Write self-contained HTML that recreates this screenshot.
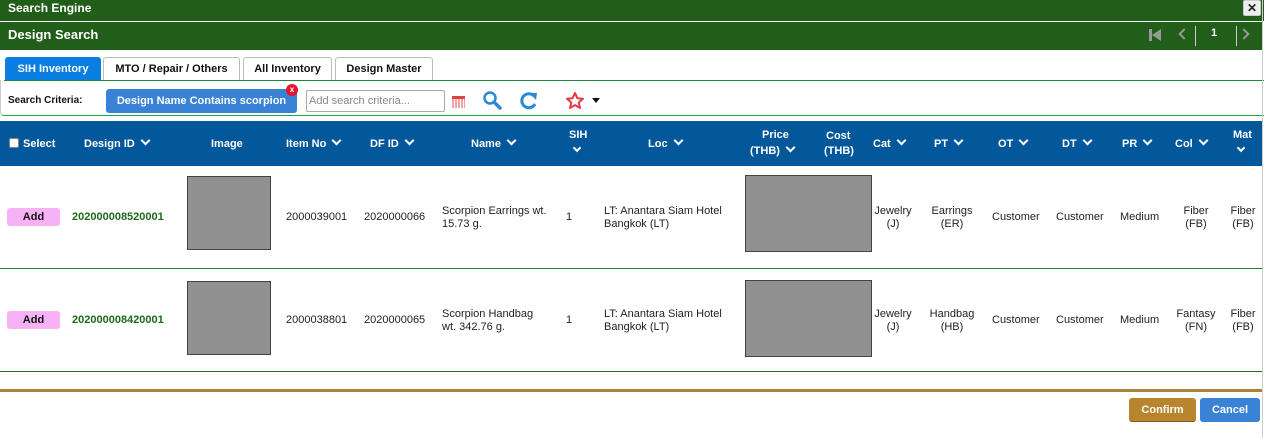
<!DOCTYPE html>
<html><head><meta charset="utf-8"><style>
*{margin:0;padding:0;box-sizing:border-box}
body{width:1264px;height:438px;overflow:hidden;background:#fff;font-family:"Liberation Sans",Arial,sans-serif;position:relative;font-size:11px;color:#222}
.a{position:absolute;white-space:nowrap}
.hd{color:#fff;font-weight:bold;font-size:11px}
.ch::after{content:"";display:inline-block;width:5px;height:5px;border-right:2px solid #fff;border-bottom:2px solid #fff;transform:rotate(45deg);margin-left:7px;position:relative;top:-3px}
.cell{font-size:11px;color:#222;line-height:13px}
.c{text-align:center}
.tab{position:absolute;top:57px;height:24px;border:1px solid #bbb;border-bottom:none;border-radius:3px 3px 0 0;font-weight:bold;font-size:11px;line-height:23px;text-align:center;background:#fff;color:#111;white-space:nowrap}
.gray{position:absolute;background:#919191;border:1px solid #444}
.add{position:absolute;left:7px;width:53px;height:18px;background:#f7b2f5;border-radius:3px;font-weight:bold;font-size:11px;line-height:18px;text-align:center;color:#111}
.did{position:absolute;left:72px;color:#1d6b1a;font-weight:bold;font-size:11px}
</style></head><body>
<div class="a" style="left:0;top:0;width:1264px;height:21px;background:#215e1a"></div>
<div class="a hd" style="left:8px;top:1px;font-size:12px">Search Engine</div>
<div class="a" style="left:1243px;top:0;width:18px;height:16px;background:#eee;border:1px solid #ccc;border-radius:2px;font-weight:bold;text-align:center;line-height:14px;font-size:12px">✕</div>
<div class="a" style="left:0;top:22px;width:1262px;height:28px;background:#215e1a"></div>
<div class="a hd" style="left:8px;top:27px;font-size:13px">Design Search</div>
<div class="a" style="left:1149px;top:29px;width:3px;height:12px;background:#999"></div>
<div class="a" style="left:1152px;top:29px;width:0;height:0;border-top:6px solid transparent;border-bottom:6px solid transparent;border-right:9px solid #999"></div>
<div class="a" style="left:1180px;top:30px;width:8px;height:8px;border-left:2px solid #999;border-bottom:2px solid #999;transform:rotate(45deg)"></div>
<div class="a" style="left:1195px;top:26px;width:1px;height:20px;background:#ccc"></div>
<div class="a" style="left:1211px;top:27px;color:#fff;font-weight:bold;font-size:11px">1</div>
<div class="a" style="left:1236px;top:26px;width:1px;height:20px;background:#ccc"></div>
<div class="a" style="left:1240px;top:30px;width:8px;height:8px;border-right:2px solid #999;border-top:2px solid #999;transform:rotate(45deg)"></div>

<div class="tab" style="left:5px;width:96px;background:#0a7de0;color:#fff;border-color:#0a7de0">SIH Inventory</div>
<div class="tab" style="left:103px;width:137px">MTO / Repair / Others</div>
<div class="tab" style="left:243px;width:89px">All Inventory</div>
<div class="tab" style="left:335px;width:98px">Design Master</div>
<div class="a" style="left:4px;top:80px;width:1260px;height:1px;background:#1c8a3c"></div>
<div class="a" style="left:0;top:80px;width:1264px;height:36px;border-left:1px solid #ccc;border-bottom:1px solid #1ca84f;border-radius:0 0 0 4px"></div>
<div class="a" style="left:8px;top:95px;font-weight:bold;font-size:10px;color:#111">Search Criteria:</div>
<div class="a" style="left:106px;top:89px;width:191px;height:24px;background:#3a82d6;border-radius:3px;color:#fff;font-weight:bold;font-size:11px;line-height:24px;text-align:center">Design Name Contains scorpion</div>
<div class="a" style="left:286px;top:84px;width:12px;height:12px;border-radius:50%;background:#e8132c;color:#fff;font-size:8px;font-weight:bold;line-height:11px;text-align:center">x</div>
<div class="a" style="left:306px;top:90px;width:139px;height:22px;border:1px solid #aaa;border-radius:2px;color:#888;font-size:11px;line-height:20px;padding-left:2px">Add search criteria...</div>
<div class="a" style="left:452px;top:96px;width:13px;height:12px;background:repeating-linear-gradient(90deg,#f0a0a0 0 2px,#fff 2px 3px);border-top:3px solid #d44"></div>
<svg class="a" style="left:482px;top:90px" width="22" height="22" viewBox="0 0 22 22"><circle cx="8" cy="8" r="5.5" fill="none" stroke="#2a8ad6" stroke-width="2.5"/><line x1="12" y1="12" x2="18" y2="18" stroke="#2a8ad6" stroke-width="3.5" stroke-linecap="round"/></svg>
<svg class="a" style="left:518px;top:90px" width="22" height="22" viewBox="0 0 22 22"><path d="M16 6 A7 7 0 1 0 17 14" fill="none" stroke="#2a8ad6" stroke-width="3"/><path d="M12 3 L19 3 L18 10 Z" fill="#2a8ad6"/></svg>
<svg class="a" style="left:565px;top:91px" width="20" height="20" viewBox="0 0 20 20"><path d="M10 2 L12.4 7.3 L18 7.8 L13.7 11.5 L15 17 L10 14.1 L5 17 L6.3 11.5 L2 7.8 L7.6 7.3 Z" fill="none" stroke="#e03c46" stroke-width="2" stroke-linejoin="round"/></svg>
<div class="a" style="left:592px;top:98px;width:0;height:0;border-left:4px solid transparent;border-right:4px solid transparent;border-top:5px solid #111"></div>

<div class="a" style="left:0;top:121px;width:1262px;height:45px;background:#02589a"></div>
<div class="a" style="left:9px;top:138px;width:10px;height:10px;background:#fff;border:1px solid #888;border-radius:2px"></div>
<div class="a hd" style="left:23px;top:138px">Select</div>
<div class="a hd ch" style="left:84px;top:138px">Design ID</div>
<div class="a hd" style="left:211px;top:138px">Image</div>
<div class="a hd ch" style="left:286px;top:138px">Item No</div>
<div class="a hd ch" style="left:370px;top:138px">DF ID</div>
<div class="a hd ch" style="left:471px;top:138px">Name</div>
<div class="a hd" style="left:569px;top:129px">SIH</div>
<div class="a" style="left:574px;top:145px;width:6px;height:6px;border-right:2px solid #fff;border-bottom:2px solid #fff;transform:rotate(45deg)"></div>
<div class="a hd ch" style="left:648px;top:138px">Loc</div>
<div class="a hd" style="left:762px;top:129px">Price</div>
<div class="a hd ch" style="left:750px;top:145px">(THB)</div>
<div class="a hd" style="left:826px;top:130px">Cost</div>
<div class="a hd" style="left:824px;top:145px">(THB)</div>
<div class="a hd ch" style="left:873px;top:138px">Cat</div>
<div class="a hd ch" style="left:934px;top:138px">PT</div>
<div class="a hd ch" style="left:998px;top:138px">OT</div>
<div class="a hd ch" style="left:1062px;top:138px">DT</div>
<div class="a hd ch" style="left:1122px;top:138px">PR</div>
<div class="a hd ch" style="left:1175px;top:138px">Col</div>
<div class="a hd" style="left:1233px;top:129px">Mat</div>
<div class="a" style="left:1238px;top:145px;width:6px;height:6px;border-right:2px solid #fff;border-bottom:2px solid #fff;transform:rotate(45deg)"></div>

<!-- row 1 -->
<div class="add" style="top:208px">Add</div>
<div class="did" style="top:211px">202000008520001</div>
<div class="gray" style="left:187px;top:176px;width:84px;height:74px"></div>
<div class="a cell" style="left:286px;top:211px">2000039001</div>
<div class="a cell" style="left:364px;top:211px">2020000066</div>
<div class="a cell" style="left:442px;top:205px">Scorpion Earrings wt.<br>15.73 g.</div>
<div class="a cell" style="left:566px;top:211px">1</div>
<div class="a cell" style="left:604px;top:205px">LT: Anantara Siam Hotel<br>Bangkok (LT)</div>
<div class="gray" style="left:745px;top:175px;width:127px;height:77px"></div>
<div class="a cell c" style="left:868px;top:205px;width:50px">Jewelry<br>(J)</div>
<div class="a cell c" style="left:922px;top:205px;width:60px">Earrings<br>(ER)</div>
<div class="a cell" style="left:992px;top:211px">Customer</div>
<div class="a cell" style="left:1056px;top:211px">Customer</div>
<div class="a cell" style="left:1120px;top:211px">Medium</div>
<div class="a cell c" style="left:1171px;top:205px;width:50px">Fiber<br>(FB)</div>
<div class="a cell c" style="left:1225px;top:205px;width:36px">Fiber<br>(FB)</div>
<div class="a" style="left:0;top:268px;width:1262px;height:1px;background:#1c8a3c"></div>
<!-- row 2 -->
<div class="add" style="top:311px">Add</div>
<div class="did" style="top:314px">202000008420001</div>
<div class="gray" style="left:187px;top:281px;width:84px;height:74px"></div>
<div class="a cell" style="left:286px;top:314px">2000038801</div>
<div class="a cell" style="left:364px;top:314px">2020000065</div>
<div class="a cell" style="left:442px;top:308px">Scorpion Handbag<br>wt. 342.76 g.</div>
<div class="a cell" style="left:566px;top:314px">1</div>
<div class="a cell" style="left:604px;top:308px">LT: Anantara Siam Hotel<br>Bangkok (LT)</div>
<div class="gray" style="left:745px;top:280px;width:127px;height:77px"></div>
<div class="a cell c" style="left:868px;top:308px;width:50px">Jewelry<br>(J)</div>
<div class="a cell c" style="left:922px;top:308px;width:60px">Handbag<br>(HB)</div>
<div class="a cell" style="left:992px;top:314px">Customer</div>
<div class="a cell" style="left:1056px;top:314px">Customer</div>
<div class="a cell" style="left:1120px;top:314px">Medium</div>
<div class="a cell c" style="left:1171px;top:308px;width:50px">Fantasy<br>(FN)</div>
<div class="a cell c" style="left:1225px;top:308px;width:36px">Fiber<br>(FB)</div>
<div class="a" style="left:0;top:371px;width:1262px;height:1px;background:#2a6a2a"></div>
<div class="a" style="left:1262px;top:0;width:1px;height:438px;background:#ccc"></div>
<div class="a" style="left:0;top:389px;width:1262px;height:3px;background:#a8843a"></div>
<div class="a" style="left:1129px;top:398px;width:67px;height:24px;background:#b8852e;border-radius:3px;color:#fff;font-weight:bold;font-size:11px;line-height:24px;text-align:center;border-bottom:1px solid #7a5a1a">Confirm</div>
<div class="a" style="left:1200px;top:398px;width:60px;height:24px;background:#3a82d6;border-radius:3px;color:#fff;font-weight:bold;font-size:11px;line-height:24px;text-align:center">Cancel</div>
</body></html>
